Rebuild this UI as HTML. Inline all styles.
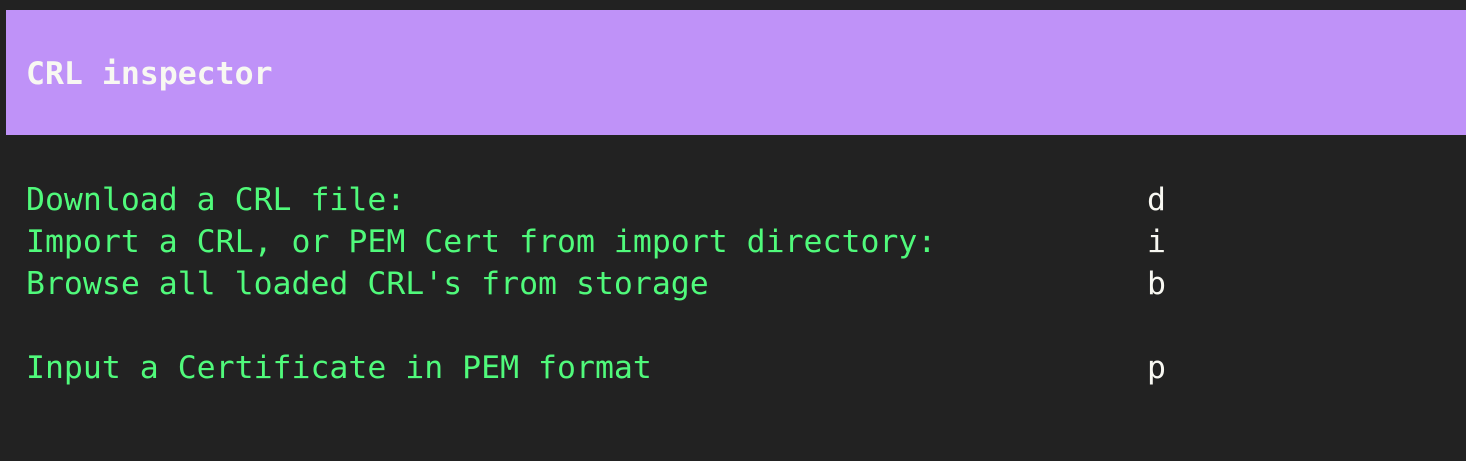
<!DOCTYPE html>
<html><head><meta charset="utf-8"><style>
html,body{margin:0;padding:0;background:#222222;width:1466px;height:461px;overflow:hidden}
body{font-family:"DejaVu Sans Mono","Liberation Mono",monospace;font-size:31.5px;line-height:42px;position:relative}
.bar{position:absolute;left:6px;top:10px;width:1460px;height:125px;background:#bf92f8}
.t{position:absolute;white-space:pre;left:26px}
.h{top:53px;color:#f8f8f2;font-weight:bold}
.g{color:#50fa7b}
.k{color:#f8f8f2;position:absolute;left:1121px}
</style></head><body>
<div class="bar"></div>
<div class="t h">CRL inspector</div>
<div class="t g" style="top:179px">Download a CRL file:<span class="k">d</span></div>
<div class="t g" style="top:221px">Import a CRL, or PEM Cert from import directory:<span class="k">i</span></div>
<div class="t g" style="top:263px">Browse all loaded CRL's from storage<span class="k">b</span></div>
<div class="t g" style="top:347px">Input a Certificate in PEM format<span class="k">p</span></div>
</body></html>
